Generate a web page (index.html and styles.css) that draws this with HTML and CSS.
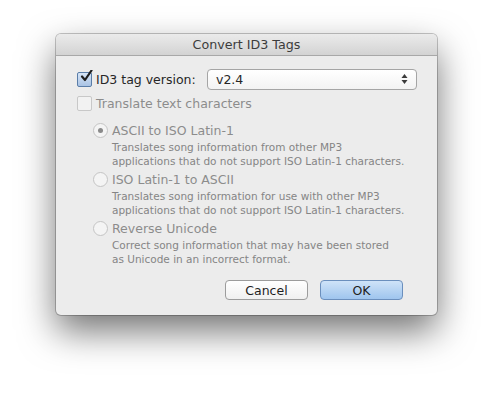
FILE: index.html
```html
<!DOCTYPE html>
<html lang="en">
<head>
    <meta charset="UTF-8">
    <title>Convert ID3 Tags</title>
    <link rel="stylesheet" href="styles.css">
</head>
<body>
    <div class="window">
        <div class="titlebar">Convert ID3 Tags</div>
        <div class="content">
            <div class="row row-version">
                <span class="checkbox checked">
                    <svg width="14" height="14" viewBox="0 0 14 14"><path d="M3 6.5 L6 10 L12.5 0.5" fill="none" stroke="#1e1e1e" stroke-width="2.2" stroke-linecap="round" stroke-linejoin="round"/></svg>
                </span>
                <span class="label">ID3 tag version:</span>
                <div class="popup">
                    <span>v2.4</span>
                    <svg class="arrows" width="7" height="12" viewBox="0 0 7 12"><path d="M3.5 1 L6.5 5 L0.5 5 Z M3.5 11 L6.5 7 L0.5 7 Z" fill="#3a3a3a"/></svg>
                </div>
            </div>

            <div class="row row-translate disabled">
                <span class="checkbox"></span>
                <span class="label">Translate text characters</span>
            </div>

            <div class="options disabled">
                <div class="option">
                    <div class="row">
                        <span class="radio selected"></span>
                        <span class="label">ASCII to ISO Latin-1</span>
                    </div>
                    <p class="desc">Translates song information from other MP3<br>applications that do not support ISO Latin-1 characters.</p>
                </div>
                <div class="option">
                    <div class="row">
                        <span class="radio"></span>
                        <span class="label">ISO Latin-1 to ASCII</span>
                    </div>
                    <p class="desc">Translates song information for use with other MP3<br>applications that do not support ISO Latin-1 characters.</p>
                </div>
                <div class="option">
                    <div class="row">
                        <span class="radio"></span>
                        <span class="label">Reverse Unicode</span>
                    </div>
                    <p class="desc">Correct song information that may have been stored<br>as Unicode in an incorrect format.</p>
                </div>
            </div>

            <div class="buttons">
                <button class="btn">Cancel</button>
                <button class="btn btn-default">OK</button>
            </div>
        </div>
    </div>
</body>
</html>
```

FILE: styles.css
```css
html {
    background: #ffffff;
}
body {
    margin: 0;
    min-height: 394px;
    box-sizing: border-box;
    padding: 34px 0 0 56px;
    font-family: "DejaVu Sans", Verdana, sans-serif;
    color: #262626;
}
.window {
    width: 381px;
    height: 281px;
    background: #ececec;
    border-radius: 5px;
    box-shadow: 0 0 0 1px rgba(0,0,0,0.22), 0 16px 36px rgba(0,0,0,0.55);
    overflow: hidden;
}
.titlebar {
    height: 21px;
    line-height: 22px;
    text-align: center;
    font-size: 12.7px;
    color: #3c3c3c;
    background: linear-gradient(#ebebeb, #d3d3d3);
    border-bottom: 1px solid #a8a8a8;
}
.content {
    padding: 12px 20px 0 21px;
}
.row {
    display: flex;
    align-items: center;
    height: 16px;
}
.label {
    flex: none;
    font-size: 12.5px;
    margin-left: 4px;
    white-space: nowrap;
}
.row-version {
    height: 22px;
}
.row-version .label {
    width: 111px;
}
.row-translate {
    margin-top: 5px;
}
.disabled .label {
    color: #8c8c8c;
}
.checkbox {
    width: 13px;
    height: 13px;
    flex: none;
    border: 1px solid #a9a9a9;
    border-radius: 2px;
    background: linear-gradient(#ffffff, #eaeaea);
    position: relative;
}
.checkbox.checked {
    border-color: #5a7da8;
    background: linear-gradient(#d6e4f6, #a9c3e4);
}
.checkbox svg {
    position: absolute;
    left: 1px;
    top: -3px;
}
.disabled .checkbox {
    border-color: #c8c8c8;
    background: #f2f2f2;
}
.popup {
    flex: none;
    width: 210px;
    height: 21px;
    padding: 0 8px;
    box-sizing: border-box;
    display: flex;
    align-items: center;
    justify-content: space-between;
    font-size: 12.5px;
    background: linear-gradient(#ffffff, #f3f3f3);
    border: 1px solid #a5a5a5;
    border-radius: 4px;
}
.options {
    margin: 11px 0 0 16px;
}
.option {
    margin-bottom: 3px;
}
.radio {
    width: 13px;
    height: 13px;
    flex: none;
    border: 1px solid #c4c4c4;
    border-radius: 50%;
    background: #f4f4f4;
    position: relative;
}
.radio.selected::after {
    content: "";
    position: absolute;
    left: 4px;
    top: 4px;
    width: 5px;
    height: 5px;
    border-radius: 50%;
    background: #8a8a8a;
}
.desc {
    margin: 2px 0 0 19px;
    font-size: 10.5px;
    line-height: 14px;
    color: #858585;
    white-space: nowrap;
}
.buttons {
    display: flex;
    justify-content: flex-end;
    gap: 12px;
    margin: 14px 14px 0 0;
}
.btn {
    width: 83px;
    height: 20px;
    padding: 0;
    font-family: inherit;
    font-size: 12.5px;
    color: #1e1e1e;
    background: linear-gradient(#ffffff, #f0f0f0);
    border: 1px solid #9c9c9c;
    border-radius: 4px;
}
.btn-default {
    background: linear-gradient(#cfe3f8, #9fc5ee);
    border-color: #6b8fbd;
}
```
